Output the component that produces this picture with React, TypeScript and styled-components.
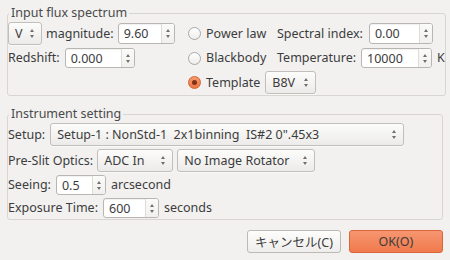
import React from "react";
import styled, { createGlobalStyle } from "styled-components";

const GlobalStyle = createGlobalStyle`
  html, body {
    margin: 0;
    padding: 0;
    background: #f2f1f0;
  }
  body {
    font-family: "Noto Sans", "Noto Sans CJK JP", sans-serif;
    font-size: 12.5px;
    color: #3c3c3c;
  }
`;

const Dialog = styled.div`
  width: 450px;
  height: 260px;
  box-sizing: border-box;
  padding: 6px 7px 0 7px;
  display: flex;
  flex-direction: column;
`;

const Group = styled.fieldset<{ $gap?: number; $mt?: number }>`
  margin: ${(p) => p.$mt ?? 0}px 0 0 0;
  padding: 2px 0 1px 0;
  border: 1px solid #d9d6d2;
  border-radius: 3px;
  display: flex;
  flex-direction: column;
  gap: ${(p) => p.$gap ?? 3}px;
`;

const Legend = styled.legend`
  padding: 0 2px;
  margin-left: 1px;
  line-height: 14px;
  color: #4a4a4a;
`;

const FluxGrid = styled.div`
  display: grid;
  grid-template-columns: 180px 89px 1fr;
  row-gap: 3px;
`;

const Cell = styled.div<{ $gap?: number; $span?: number }>`
  display: flex;
  align-items: center;
  gap: ${(p) => p.$gap ?? 5}px;
  min-height: 20px;
  grid-column: span ${(p) => p.$span ?? 1};
`;

const Row = styled.div<{ $gap?: number }>`
  display: flex;
  align-items: center;
  gap: ${(p) => p.$gap ?? 5}px;
`;

const Label = styled.span`
  white-space: pre;
  line-height: 16px;
  flex: none;
`;

/* spin button entry */
const SpinBox = styled.div<{ $w: number; $h?: number }>`
  width: ${(p) => p.$w}px;
  height: ${(p) => p.$h ?? 20}px;
  flex: none;
  box-sizing: border-box;
  display: flex;
  border: 1px solid #b9b6b2;
  border-radius: 3px;
  background: #ffffff;
  overflow: hidden;
  box-shadow: inset 0 1px 1px rgba(0, 0, 0, 0.06);
`;

const SpinText = styled.div`
  flex: 1;
  padding-left: 5px;
  display: flex;
  align-items: center;
  color: #3c3c3c;
`;

const SpinButtons = styled.div`
  width: 12px;
  border-left: 1px solid #dedcd9;
  background: linear-gradient(#fbfbfa, #f1f0ee);
  display: flex;
  flex-direction: column;
  align-items: center;
  justify-content: center;
  gap: 3px;
`;

const Arrow = styled.div<{ $down?: boolean }>`
  width: 0;
  height: 0;
  border-left: 2.5px solid transparent;
  border-right: 2.5px solid transparent;
  ${(p) =>
    p.$down
      ? "border-top: 3px solid #6f6f6f;"
      : "border-bottom: 3px solid #6f6f6f;"}
`;

const Spin = ({ value, w, h }: { value: string; w: number; h?: number }) => (
  <SpinBox $w={w} $h={h}>
    <SpinText>{value}</SpinText>
    <SpinButtons>
      <Arrow />
      <Arrow $down />
    </SpinButtons>
  </SpinBox>
);

/* combo box (button style) */
const ComboBox = styled.div<{ $w: number }>`
  width: ${(p) => p.$w}px;
  height: 23px;
  flex: none;
  box-sizing: border-box;
  display: flex;
  align-items: center;
  padding: 0 7px 0 6px;
  border: 1px solid #c2bfbb;
  border-radius: 3px;
  background: linear-gradient(#fcfcfb, #ecebe9);
  box-shadow: 0 1px 0 rgba(255, 255, 255, 0.6);
`;

const ComboText = styled.span`
  flex: 1;
  white-space: pre;
  overflow: hidden;
`;

const ComboArrows = styled.div`
  display: flex;
  flex-direction: column;
  gap: 3px;
`;

const Combo = ({ value, w }: { value: string; w: number }) => (
  <ComboBox $w={w}>
    <ComboText>{value}</ComboText>
    <ComboArrows>
      <Arrow />
      <Arrow $down />
    </ComboArrows>
  </ComboBox>
);

/* radio */
const RadioDot = styled.span<{ $on?: boolean }>`
  width: 13px;
  height: 13px;
  box-sizing: border-box;
  border-radius: 50%;
  flex: none;
  display: flex;
  align-items: center;
  justify-content: center;
  border: 1px solid ${(p) => (p.$on ? "#d2622f" : "#aaa7a3")};
  background: ${(p) =>
    p.$on
      ? "linear-gradient(#f69a70, #ee7544)"
      : "linear-gradient(#ffffff, #eeedeb)"};

  &::after {
    content: "";
    width: 5px;
    height: 5px;
    border-radius: 50%;
    background: #7e3216;
    display: ${(p) => (p.$on ? "block" : "none")};
  }
`;

const Radio = ({ label, on }: { label: string; on?: boolean }) => (
  <Cell $gap={5}>
    <RadioDot $on={on} />
    <Label>{label}</Label>
  </Cell>
);

const Footer = styled.div`
  display: flex;
  justify-content: flex-end;
  gap: 8px;
  margin-top: 10px;
`;

const Button = styled.button<{ $primary?: boolean }>`
  width: 94px;
  height: 23px;
  box-sizing: border-box;
  font: inherit;
  font-family: "Noto Sans", "Noto Sans CJK JP", sans-serif;
  color: #3c3c3c;
  padding: 0;
  border-radius: 3px;
  border: 1px solid ${(p) => (p.$primary ? "#d9663a" : "#bdbab6")};
  background: ${(p) =>
    p.$primary
      ? "linear-gradient(#f69671, #f07a4c)"
      : "linear-gradient(#fdfdfc, #eeedeb)"};
`;

export default function App() {
  return (
    <>
      <GlobalStyle />
      <Dialog>
        <Group>
          <Legend>Input flux spectrum</Legend>
          <FluxGrid>
            <Cell $gap={4}>
              <Combo value="V" w={34} />
              <Label>magnitude:</Label>
              <Spin value="9.60" w={57} h={21} />
            </Cell>
            <Radio label="Power law" />
            <Cell $gap={6}>
              <Label>Spectral index:</Label>
              <Spin value="0.00" w={64} h={21} />
            </Cell>

            <Cell $gap={5}>
              <Label>Redshift:</Label>
              <Spin value="0.000" w={70} />
            </Cell>
            <Radio label="Blackbody" />
            <Cell $gap={5}>
              <Label>Temperature:</Label>
              <Spin value="10000" w={71} />
              <Label>K</Label>
            </Cell>

            <Cell />
            <Cell $gap={5} $span={2}>
              <RadioDot $on />
              <Label>Template</Label>
              <Combo value="B8V" w={51} />
            </Cell>
          </FluxGrid>
        </Group>

        <Group $mt={11}>
          <Legend>Instrument setting</Legend>
          <Row>
            <Label>Setup:</Label>
            <Combo value="Setup-1 : NonStd-1  2x1binning  IS#2 0&quot;.45x3" w={354} />
          </Row>
          <Row $gap={4}>
            <Label>Pre-Slit Optics:</Label>
            <Combo value="ADC In" w={76} />
            <Combo value="No Image Rotator" w={138} />
          </Row>
          <Row>
            <Label>Seeing:</Label>
            <Spin value="0.5" w={50} />
            <Label>arcsecond</Label>
          </Row>
          <Row>
            <Label>Exposure Time:</Label>
            <Spin value="600" w={56} />
            <Label>seconds</Label>
          </Row>
        </Group>

        <Footer>
          <Button>キャンセル(C)</Button>
          <Button $primary>OK(O)</Button>
        </Footer>
      </Dialog>
    </>
  );
}
